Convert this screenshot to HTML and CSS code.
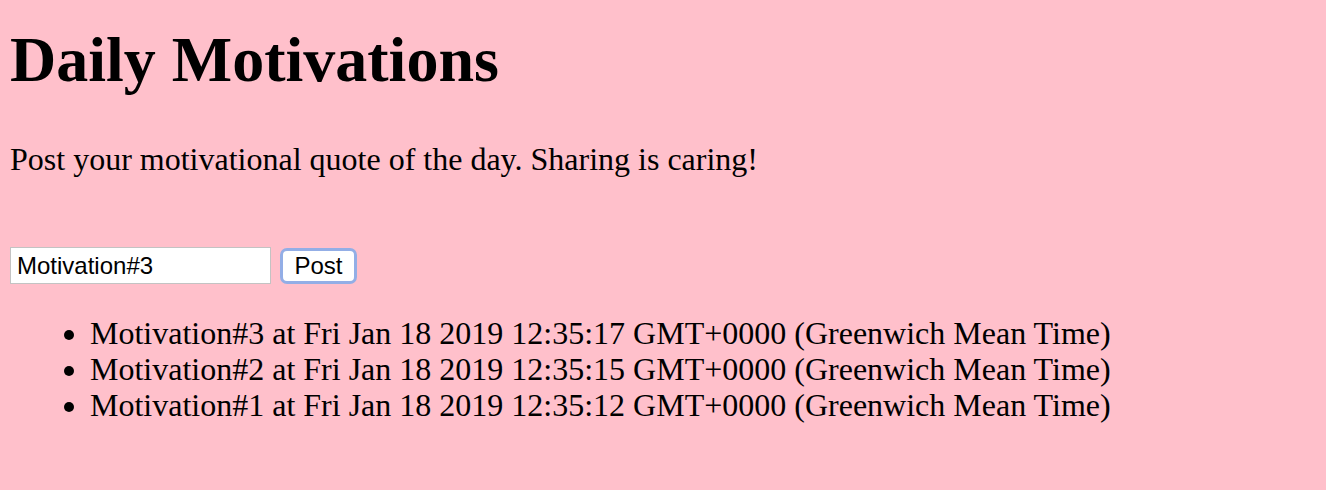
FILE: index.html
```html
<!DOCTYPE html>
<html>
<head>
<meta charset="utf-8">
<title>Daily Motivations</title>
<link rel="stylesheet" href="styles.css">
</head>
<body>
<h1 class="title">Daily Motivations</h1>
<p class="intro">Post your motivational quote of the day. Sharing is caring!</p>
<form class="post-form">
  <input class="post-input" type="text" value="Motivation#3">
  <button class="post-button" type="button">Post</button>
</form>
<ul class="posts">
  <li>Motivation#3 at Fri Jan 18 2019 12:35:17 GMT+0000 (Greenwich Mean Time)</li>
  <li>Motivation#2 at Fri Jan 18 2019 12:35:15 GMT+0000 (Greenwich Mean Time)</li>
  <li>Motivation#1 at Fri Jan 18 2019 12:35:12 GMT+0000 (Greenwich Mean Time)</li>
</ul>
</body>
</html>
```

FILE: styles.css
```css
html, body {
  background: #ffc0cb;
}
body {
  margin: 0;
  padding: 0 10px;
  font-family: "Liberation Serif", "Times New Roman", serif;
  color: #000;
}
.title {
  margin: 23px 0 0 0;
  font-size: 64px;
  line-height: 74px;
  font-weight: bold;
}
.intro {
  margin: 44px 0 0 0;
  font-size: 32px;
  line-height: 37px;
}
.post-form {
  display: flex;
  align-items: center;
  gap: 9px;
  margin-top: 69px;
}
.post-input {
  box-sizing: border-box;
  width: 261px;
  height: 37px;
  margin: 0;
  padding: 0 6px;
  border: 1px solid #c3c3c3;
  background: #fff;
  font-family: "Liberation Sans", Arial, sans-serif;
  font-size: 24px;
  color: #000;
  outline: none;
}
.post-button {
  box-sizing: border-box;
  width: 77px;
  height: 36px;
  margin: 0;
  padding: 0;
  border: 3px solid #93aee6;
  border-radius: 7px;
  background: #fff;
  font-family: "Liberation Sans", Arial, sans-serif;
  font-size: 24px;
  color: #000;
}
.posts {
  margin: 31px 0 0 0;
  padding-left: 80px;
  font-size: 32px;
  line-height: 36px;
}
```
